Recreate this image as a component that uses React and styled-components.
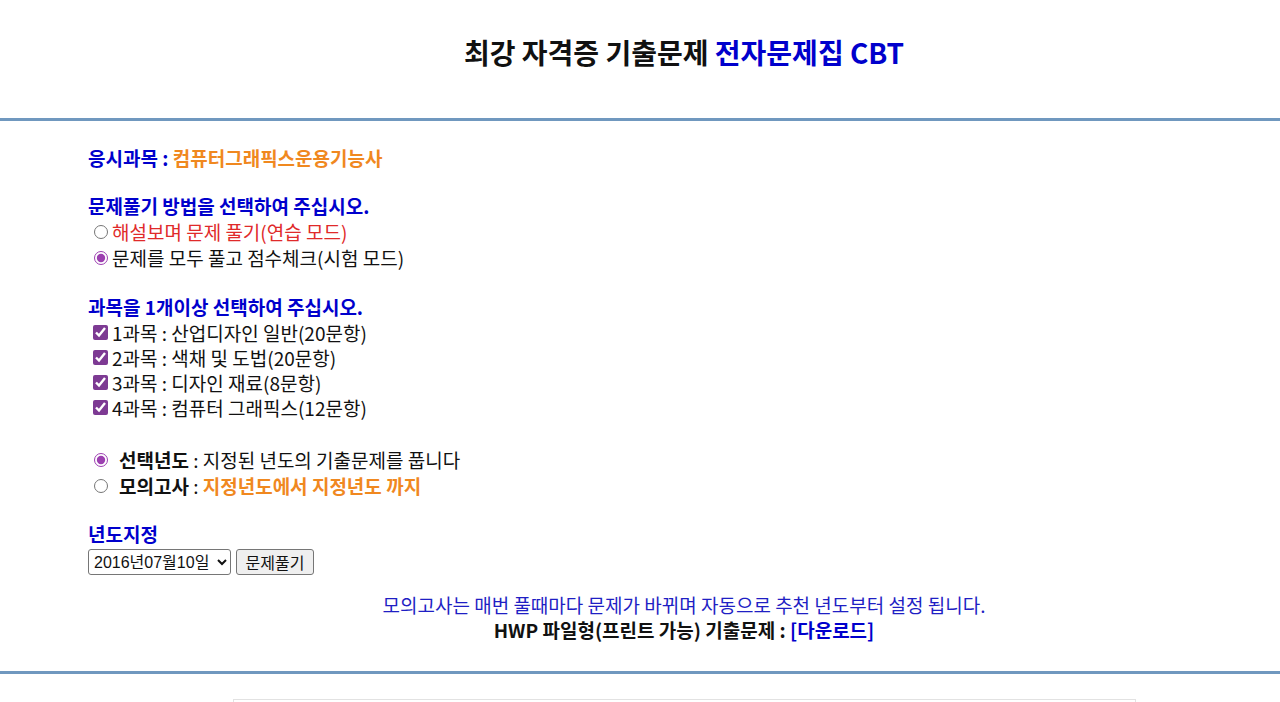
import React from 'react'
import styled, { createGlobalStyle } from 'styled-components'

const GlobalStyle = createGlobalStyle`
    html, body {
        margin:0;
        padding:0;
        background:#fff;
    }
    body {
        font-family:'Noto Sans CJK KR', 'Noto Sans', sans-serif;
        font-size:19px;
        line-height:26px;
        color:#111;
    }
`

const Header = styled.div`
    height:118px;
    display:flex;
    justify-content:center;
    align-items:center;
    padding-left:88px;
    padding-bottom:14px;
    box-sizing:border-box;
`
const Title = styled.h1`
    margin:0;
    font-size:28px;
    font-weight:700;
    color:#111;
`
const Blue = styled.span`
    color:${p => p.color || '#0000cc'};
`
const Rule = styled.hr`
    border:none;
    height:3px;
    margin:0;
    background-color:#7098bf;
`
const Main = styled.div`
    padding:24px 0 0 88px;
`
const Heading = styled.div`
    font-weight:700;
    color:#0000cc;
    line-height:26px;
    margin-top:${p => p.gap || 0}px;
`
const Orange = styled.span`
    color:#f0881f;
    font-weight:700;
`
const OptionRow = styled.label`
    display:flex;
    align-items:center;
    height:${p => p.h || 26}px;
    color:${p => p.color || '#111'};
    white-space:pre;
`
const Radio = styled.input.attrs({ type: 'radio' })`
    width:14px;
    height:14px;
    margin:0 ${p => p.wide ? 11 : 4}px 0 6px;
    accent-color:#9c3fb0;
`
const Check = styled.input.attrs({ type: 'checkbox' })`
    width:15px;
    height:15px;
    margin:0 4px 0 5px;
    accent-color:#7d3a93;
`
const Group = styled.div`
    margin-top:${p => p.gap || 0}px;
`
const YearRow = styled.div`
    display:flex;
    align-items:center;
    gap:5px;
    margin-top:2px;
`
const Select = styled.select`
    height:26px;
    width:143px;
    font-size:16px;
    font-family:'Liberation Sans', 'Noto Sans CJK KR', sans-serif;
    padding:0 1px;
    border:1px solid #767676;
    border-radius:3px;
    background:#fff;
    color:#111;
`
const Button = styled.button`
    height:26px;
    width:78px;
    font-size:16px;
    font-family:'Noto Sans CJK KR', sans-serif;
    padding:0;
    border:1px solid #767676;
    border-radius:3px;
    background:#efefef;
    color:#111;
`
const Notice = styled.div`
    text-align:center;
    margin-top:17px;
    margin-bottom:29px;
    line-height:25px;
`
const NoticeLine = styled.div`
    color:${p => p.color || '#111'};
    font-weight:${p => p.bold ? 700 : 400};
`
const Footer = styled.div`
    padding:25px 0 0 88px;
    display:flex;
    justify-content:center;
`
const FooterBox = styled.div`
    width:903px;
    height:40px;
    border:1px solid #e2e2e2;
    border-bottom:none;
    box-sizing:border-box;
`

const subjects = [
    '1과목 : 산업디자인 일반(20문항)',
    '2과목 : 색채 및 도법(20문항)',
    '3과목 : 디자인 재료(8문항)',
    '4과목 : 컴퓨터 그래픽스(12문항)',
]

const App = () => {
    return (
        <>
            <GlobalStyle />
            <Header>
                <Title>
                    최강 자격증 기출문제 <Blue>전자문제집 CBT</Blue>
                </Title>
            </Header>
            <Rule />
            <Main>
                <Heading>
                    응시과목 : <Orange>컴퓨터그래픽스운용기능사</Orange>
                </Heading>
                <Heading gap={22}>문제풀기 방법을 선택하여 주십시오.</Heading>
                <OptionRow color="#e02a2a">
                    <Radio name="mode" />해설보며 문제 풀기(연습 모드)
                </OptionRow>
                <OptionRow>
                    <Radio name="mode" defaultChecked />문제를 모두 풀고 점수체크(시험 모드)
                </OptionRow>
                <Heading gap={23}>과목을 1개이상 선택하여 주십시오.</Heading>
                {subjects.map(s => (
                    <OptionRow key={s} h={25}>
                        <Check defaultChecked />{s}
                    </OptionRow>
                ))}
                <Group gap={27}>
                    <OptionRow>
                        <Radio name="year" wide defaultChecked />
                        <b>선택년도</b> : 지정된 년도의 기출문제를 풉니다
                    </OptionRow>
                    <OptionRow>
                        <Radio name="year" wide />
                        <b>모의고사</b> : <Orange>지정년도에서 지정년도 까지</Orange>
                    </OptionRow>
                </Group>
                <Heading gap={22}>년도지정</Heading>
                <YearRow>
                    <Select defaultValue="20160710">
                        <option value="20160710">2016년07월10일</option>
                    </Select>
                    <Button>문제풀기</Button>
                </YearRow>
                <Notice>
                    <NoticeLine color="#1f1fc4">모의고사는 매번 풀때마다 문제가 바뀌며 자동으로 추천 년도부터 설정 됩니다.</NoticeLine>
                    <NoticeLine bold>
                        HWP 파일형(프린트 가능) 기출문제 : <Blue>[다운로드]</Blue>
                    </NoticeLine>
                </Notice>
            </Main>
            <Rule />
            <Footer>
                <FooterBox />
            </Footer>
        </>
    )
}

export default App
